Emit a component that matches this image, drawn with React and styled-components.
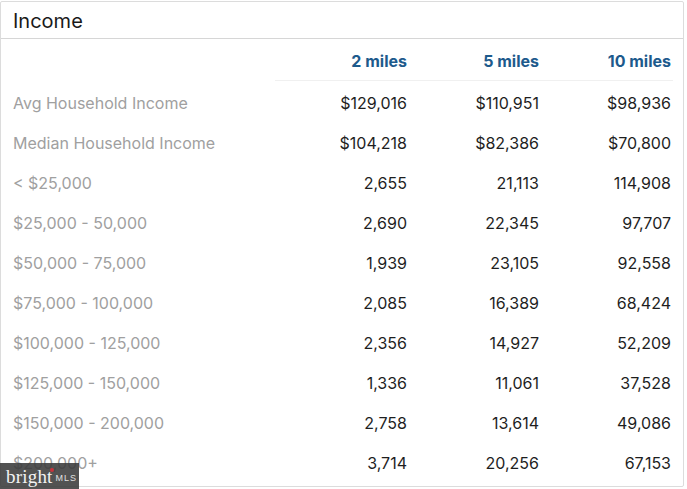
import React from 'react'
import styled, { createGlobalStyle } from 'styled-components'

const GlobalStyle = createGlobalStyle`
  html, body {
    margin: 0;
    padding: 0;
    background: #ffffff;
    font-family: Inter, "Noto Sans", sans-serif;
    overflow: hidden;
  }
`

const columns = ['2 miles', '5 miles', '10 miles']

const rows = [
  ['Avg Household Income', '$129,016', '$110,951', '$98,936'],
  ['Median Household Income', '$104,218', '$82,386', '$70,800'],
  ['< $25,000', '2,655', '21,113', '114,908'],
  ['$25,000 - 50,000', '2,690', '22,345', '97,707'],
  ['$50,000 - 75,000', '1,939', '23,105', '92,558'],
  ['$75,000 - 100,000', '2,085', '16,389', '68,424'],
  ['$100,000 - 125,000', '2,356', '14,927', '52,209'],
  ['$125,000 - 150,000', '1,336', '11,061', '37,528'],
  ['$150,000 - 200,000', '2,758', '13,614', '49,086'],
  ['$200,000+', '3,714', '20,256', '67,153'],
]

function App() {
  return (
    <>
      <GlobalStyle />
      <Page>
        <Card>
          <CardHeader>
            <Title>Income</Title>
          </CardHeader>
          <Table>
            <HeadRow>
              <Spacer />
              <HeadCells>
                {columns.map((c) => (
                  <HeadCell key={c}>{c}</HeadCell>
                ))}
              </HeadCells>
            </HeadRow>
            {rows.map(([label, ...values]) => (
              <Row key={label}>
                <Label>{label}</Label>
                {values.map((v, i) => (
                  <Value key={i}>{v}</Value>
                ))}
              </Row>
            ))}
          </Table>
        </Card>
        <Watermark>
          <Brand>
            brigh<Tee>t</Tee>
          </Brand>
          <Mls>MLS</Mls>
        </Watermark>
      </Page>
    </>
  )
}

export default App

const Page = styled.div`
  position: relative;
  width: 687px;
  height: 489px;
  padding-top: 1px;
  box-sizing: border-box;
`

const Card = styled.div`
  width: 684px;
  height: 486px;
  box-sizing: border-box;
  border: 1px solid #dcdcdc;
  border-radius: 2px;
  overflow: hidden;
  background: #ffffff;
`

const CardHeader = styled.div`
  height: 37px;
  display: flex;
  align-items: center;
  padding: 0 12px;
  border-bottom: 1px solid #d6d6d6;
  box-sizing: border-box;
`

const Title = styled.h2`
  margin: 0;
  font-size: 20px;
  font-weight: 400;
  color: #1a1a1a;
  margin-top: 1px;
`

const Table = styled.div`
  display: flex;
  flex-direction: column;
  padding: 2px 12px 0 12px;
`

const HeadRow = styled.div`
  display: grid;
  grid-template-columns: 262px 1fr;
  height: 40px;
`

const Spacer = styled.div``

const HeadCells = styled.div`
  display: grid;
  grid-template-columns: 132px 132px 132px;
  border-bottom: 1px solid #f0f0f0;
  margin-right: -2px;
  padding-right: 2px;
`

const HeadCell = styled.div`
  display: flex;
  align-items: center;
  justify-content: flex-end;
  font-size: 16px;
  font-weight: 700;
  color: #1d5a8c;
`

const Row = styled.div`
  display: grid;
  grid-template-columns: 262px 132px 132px 132px;
  height: 40px;
  align-items: center;
  padding-top: 3px;
  box-sizing: border-box;
`

const Label = styled.div`
  font-size: 16px;
  color: #a0a0a0;
  white-space: nowrap;
`

const Value = styled.div`
  font-size: 16px;
  color: #1e1e1e;
  text-align: right;
  white-space: nowrap;
`

const Watermark = styled.div`
  position: absolute;
  left: 0;
  bottom: 0;
  width: 79px;
  height: 26px;
  background: rgba(58, 58, 58, 0.88);
  display: flex;
  align-items: center;
  padding-left: 6px;
  box-sizing: border-box;
  gap: 3px;
`

const Brand = styled.span`
  font-family: "Liberation Serif", "DejaVu Serif", serif;
  font-size: 19px;
  color: #f2f2f2;
  letter-spacing: 0.2px;
  line-height: 1;
`

const Tee = styled.span`
  position: relative;
  &::after {
    content: '';
    position: absolute;
    right: -1px;
    top: 2px;
    width: 4px;
    height: 4px;
    border-radius: 50%;
    background: #c8323c;
  }
`

const Mls = styled.span`
  font-family: "Liberation Sans", sans-serif;
  font-size: 9px;
  color: #e0e0e0;
  letter-spacing: 1px;
  margin-top: 3px;
`
